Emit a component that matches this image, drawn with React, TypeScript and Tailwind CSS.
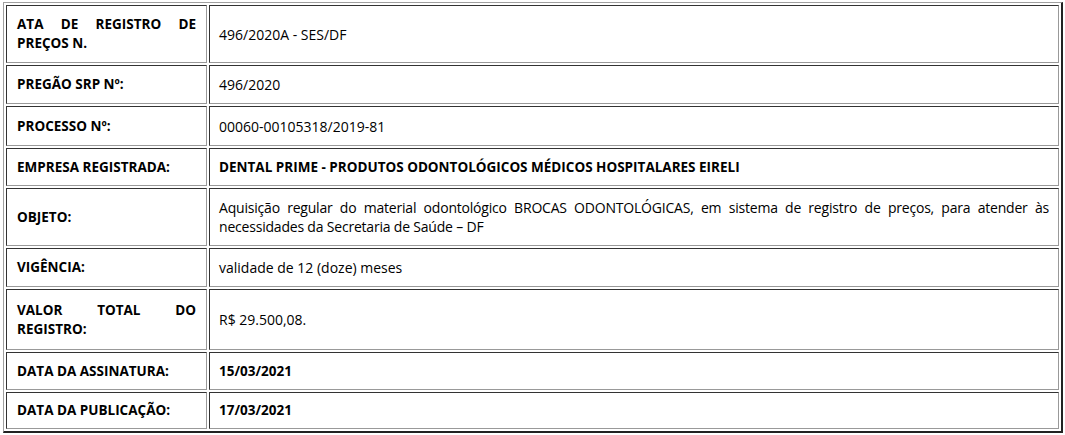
const rows: { label: string; value: string; bold?: boolean; tight?: boolean; h: string }[] = [
  { label: 'ATA DE REGISTRO DE PREÇOS N.', value: '496/2020A - SES/DF', h: 'h-[58px]' },
  { label: 'PREGÃO SRP Nº:', value: '496/2020', h: 'h-[39px]' },
  { label: 'PROCESSO Nº:', value: '00060-00105318/2019-81', h: 'h-[40px]' },
  {
    label: 'EMPRESA REGISTRADA:',
    value: 'DENTAL PRIME - PRODUTOS ODONTOLÓGICOS MÉDICOS HOSPITALARES EIRELI',
    bold: true,
    h: 'h-[38px]',
  },
  {
    label: 'OBJETO:',
    value:
      'Aquisição regular do material odontológico BROCAS ODONTOLÓGICAS, em sistema de registro de preços, para atender às necessidades da Secretaria de Saúde – DF',
    tight: true,
    h: 'h-[58px]',
  },
  { label: 'VIGÊNCIA:', value: 'validade de 12 (doze) meses', h: 'h-[39px]' },
  { label: 'VALOR TOTAL DO REGISTRO:', value: 'R$ 29.500,08.', h: 'h-[61px]' },
  { label: 'DATA DA ASSINATURA:', value: '15/03/2021', bold: true, h: 'h-[38px]' },
  { label: 'DATA DA PUBLICAÇÃO:', value: '17/03/2021', bold: true, h: 'h-[37px]' },
];

export default function App() {
  return (
    <div className="w-[1065px] h-[435px] bg-white pl-[3px] pt-[2px] text-black font-['Open_Sans',sans-serif] leading-[19px]">
      <table className="w-[1060px] border-separate border-spacing-[2px] border-t border-l border-r-2 border-b-2 border-t-[#a0a0a0] border-l-[#a0a0a0] border-r-[#222] border-b-[#222]">
        <tbody>
          {rows.map((r) => (
            <tr key={r.label}>
              <td
                className={`${r.h} w-[201px] px-[10px] align-middle text-justify text-[13.5px] font-bold border border-t-[#333] border-l-[#333] border-r-[#999] border-b-[#999]`}
              >
                {r.label}
              </td>
              <td
                className={`px-[9px] align-middle text-justify border border-t-[#333] border-l-[#333] border-r-[#999] border-b-[#999] ${
                  r.bold ? 'font-bold text-[13.5px]' : 'text-[14px]'
                } ${r.tight ? 'tracking-[-0.2px]' : ''}`}
              >
                {r.value}
              </td>
            </tr>
          ))}
        </tbody>
      </table>
    </div>
  );
}
